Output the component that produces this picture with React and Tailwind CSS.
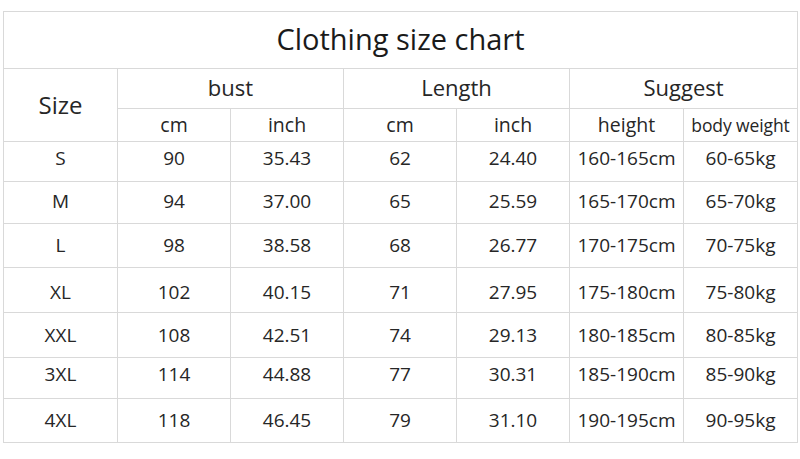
import React from "react";

const rows = [
  { size: "S", h: "h-[40px]", v: ["90", "35.43", "62", "24.40", "160-165cm", "60-65kg"], pad: "pb-[6px]" },
  { size: "M", h: "h-[42px]", v: ["94", "37.00", "65", "25.59", "165-170cm", "65-70kg"], pad: "pb-[2px]" },
  { size: "L", h: "h-[44px]", v: ["98", "38.58", "68", "26.77", "170-175cm", "70-75kg"], pad: "pb-0" },
  { size: "XL", h: "h-[45px]", v: ["102", "40.15", "71", "27.95", "175-180cm", "75-80kg"], pad: "pt-[4px]" },
  { size: "XXL", h: "h-[45px]", v: ["108", "42.51", "74", "29.13", "180-185cm", "80-85kg"], pad: "pb-0" },
  { size: "3XL", h: "h-[41px]", v: ["114", "44.88", "77", "30.31", "185-190cm", "85-90kg"], pad: "pb-[8px]" },
  { size: "4XL", h: "h-[44px]", v: ["118", "46.45", "79", "31.10", "190-195cm", "90-95kg"], pad: "pb-0" },
];

const cell = "border border-[#d9d9d9] text-center p-0 align-middle";

export default function App() {
  return (
    <div className="w-[800px] h-[459px] bg-white pl-[3px] pt-[11px] font-['Open_Sans',sans-serif] text-[#262626]">
      <table className="table-fixed border-collapse w-[794px]">
        <colgroup>
          <col className="w-[114px]" />
          <col className="w-[113px]" />
          <col className="w-[113px]" />
          <col className="w-[113px]" />
          <col className="w-[113px]" />
          <col className="w-[114px]" />
          <col className="w-[114px]" />
        </colgroup>
        <tbody>
          <tr className="h-[57px]">
            <td colSpan={7} className={`${cell} text-[29px] text-[#1a1a1a] pb-[2px]`}>
              Clothing size chart
            </td>
          </tr>
          <tr className="h-[40px]">
            <td rowSpan={2} className={`${cell} text-[24px]`}>Size</td>
            <td colSpan={2} className={`${cell} text-[22px] pb-[2px]`}>bust</td>
            <td colSpan={2} className={`${cell} text-[22px] pb-[2px]`}>Length</td>
            <td colSpan={2} className={`${cell} text-[22px] pb-[2px]`}>Suggest</td>
          </tr>
          <tr className="h-[33px] text-[19.5px]">
            <td className={cell}>cm</td>
            <td className={cell}>inch</td>
            <td className={cell}>cm</td>
            <td className={cell}>inch</td>
            <td className={cell}>height</td>
            <td className={`${cell} text-[17.5px] tracking-[-0.1px]`}>body weight</td>
          </tr>
          {rows.map((r) => (
            <tr key={r.size} className={`${r.h} text-[19px]`}>
              <td className={`${cell} ${r.pad}`}>{r.size}</td>
              {r.v.map((x, i) => (
                <td key={i} className={`${cell} ${r.pad}`}>
                  {x}
                </td>
              ))}
            </tr>
          ))}
        </tbody>
      </table>
    </div>
  );
}
